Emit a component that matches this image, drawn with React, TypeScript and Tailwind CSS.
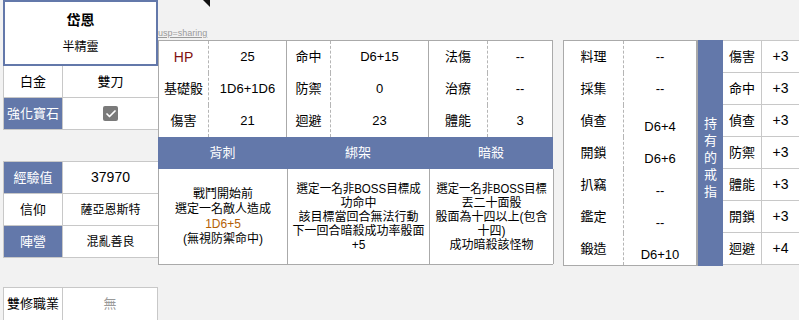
import type { ReactNode } from "react";
import { Check } from "lucide-react";

const FONT = "font-['Liberation_Sans','Noto_Sans_CJK_TC',sans-serif]";

const stats = [
  ["HP", "25", "命中", "D6+15", "法傷", "--"],
  ["基礎骰", "1D6+1D6", "防禦", "0", "治療", "--"],
  ["傷害", "21", "迴避", "23", "體能", "3"],
];

// 技能 — rows from the third on sit a bit lower in the value column
const skills = [
  ["料理", "--"],
  ["採集", "--"],
  ["偵查", "D6+4"],
  ["開鎖", "D6+6"],
  ["扒竊", "--"],
  ["鑑定", "--"],
  ["鍛造", "D6+10"],
];

const rings = [
  ["傷害", "+3"],
  ["命中", "+3"],
  ["偵查", "+3"],
  ["防禦", "+3"],
  ["體能", "+3"],
  ["開鎖", "+3"],
  ["迴避", "+4"],
];

function Line({ children, squeeze = "" }: { children: ReactNode; squeeze?: string }) {
  return (
    <div className="flex justify-center whitespace-nowrap">
      <span className={`inline-block origin-center ${squeeze}`}>{children}</span>
    </div>
  );
}

function LeftCol() {
  return (
    <div className="flex w-[155px] shrink-0 flex-col text-[13px] text-black">
      {/* 角色名 */}
      <div className="flex h-[72px] flex-col items-center border-2 border-[#6378aa] bg-white pt-[8px]">
        <div className="text-[14px] font-semibold leading-[20px]">岱恩</div>
        <div className="mt-[9px] text-[12px] leading-[16px]">半精靈</div>
      </div>
      <div className="grid grid-cols-[59px_1fr] border-l border-[#c8c8c8] bg-white">
        <div className="flex h-[32px] items-center justify-center border-r border-b border-[#c8c8c8]">白金</div>
        <div className="flex h-[32px] items-center justify-center border-b border-[#c8c8c8]">雙刀</div>
        <div className="flex h-[32px] items-center justify-center border-r border-b border-[#c8c8c8] bg-[#6378aa] text-white">強化寶石</div>
        <div className="flex h-[32px] items-center justify-center border-b border-[#c8c8c8]">
          <span className="flex h-[15px] w-[15px] items-center justify-center rounded-[2px] bg-[#7a7a7a]">
            <Check size={12} strokeWidth={3.5} className="text-white" />
          </span>
        </div>
      </div>

      <div className="mt-[31px] grid grid-cols-[59px_1fr] border-t border-l border-[#c8c8c8] bg-white">
        <div className="flex h-[32px] items-center justify-center border-r border-b border-[#c8c8c8] bg-[#6378aa] text-white">經驗值</div>
        <div className="flex h-[32px] items-center justify-center border-b border-[#c8c8c8] text-[14px]">37970</div>
        <div className="flex h-[32px] items-center justify-center border-r border-b border-[#c8c8c8]">信仰</div>
        <div className="flex h-[32px] items-center justify-center border-b border-[#c8c8c8] text-[12px]">薩亞恩斯特</div>
        <div className="flex h-[32px] items-center justify-center border-r border-b border-[#c8c8c8] bg-[#6378aa] text-white">陣營</div>
        <div className="flex h-[32px] items-center justify-center border-b border-[#c8c8c8] text-[12px]">混亂善良</div>
      </div>

      <div className="mt-[29px] grid grid-cols-[59px_1fr] border-t border-l border-[#c8c8c8] bg-white">
        <div className="flex h-[32px] items-center justify-center border-r border-[#c8c8c8]">雙修職業</div>
        <div className="flex h-[32px] items-center justify-center border-r border-[#c8c8c8] text-[#9a9a9a]">無</div>
      </div>
    </div>
  );
}

function MidCol() {
  return (
    <div className="flex w-[395px] shrink-0 flex-col text-[13px] text-black">
      <div className="relative flex h-[40px] flex-col justify-end pb-[2px]">
        {/* comment marker */}
        <svg className="absolute left-[45px] top-0" width="7" height="7" viewBox="0 0 7 7">
          <polygon points="0,0 7,0 7,7" fill="#111" />
        </svg>
        <span className="text-[9px] leading-[10px] text-[#9a9a9a] underline">usp=sharing</span>
      </div>

      <div className="grid grid-cols-[50px_78px_44px_98px_59px_65px] border-t border-l border-[#aaaaaa] bg-white">
        {stats.map((row, r) =>
          row.map((cell, c) => {
            const label = c % 2 === 0;
            return (
              <div
                key={`${r}-${c}`}
                className={
                  label
                    ? "flex h-[32px] items-center justify-center border-r border-dashed border-[#b5b5b5]"
                    : "flex h-[32px] items-center justify-center border-r border-[#aaaaaa]"
                }
              >
                <span className={cell === "HP" ? "text-[14px] text-[#7f1010]" : ""}>{cell}</span>
              </div>
            );
          })
        )}
      </div>

      <div className="grid h-[32px] grid-cols-[129px_142px_124px] bg-[#6378aa] text-white">
        <div className="flex items-center justify-center">背刺</div>
        <div className="flex items-center justify-center">綁架</div>
        <div className="flex items-center justify-center">暗殺</div>
      </div>

      <div className="grid h-[96px] grid-cols-[129px_142px_124px] border-l border-b border-[#aaaaaa] bg-white text-[12px] leading-[14px]">
        <div className="flex flex-col justify-center border-r border-[#aaaaaa] leading-[15px]">
          <Line>戰鬥開始前</Line>
          <Line>選定一名敵人造成</Line>
          <Line>
            <span className="text-[#b45f06]">1D6+5</span>
          </Line>
          <Line>(無視防禦命中)</Line>
        </div>
        <div className="flex flex-col justify-center overflow-hidden border-r border-[#aaaaaa]">
          <Line squeeze="scale-x-[0.96]">選定一名非BOSS目標成</Line>
          <Line>功命中</Line>
          <Line>該目標當回合無法行動</Line>
          <Line>下一回合暗殺成功率骰面</Line>
          <Line>+5</Line>
        </div>
        <div className="flex flex-col justify-center overflow-hidden border-r border-[#aaaaaa]">
          <Line squeeze="scale-x-[0.94]">選定一名非BOSS目標</Line>
          <Line>丟二十面骰</Line>
          <Line>骰面為十四以上(包含</Line>
          <Line>十四)</Line>
          <Line>成功暗殺該怪物</Line>
        </div>
      </div>
    </div>
  );
}

function RightCol() {
  return (
    <div className="ml-[10px] mt-[40px] flex items-start text-[13px] text-black">
      {/* 技能 */}
      <div className="grid w-[135px] grid-cols-[60px_1fr] border-t border-l border-b border-r-2 border-[#aaaaaa] bg-white">
        {skills.map(([name, val], i) => (
          <div key={name} className="contents">
            <div className="flex h-[32px] items-center justify-center border-r border-dashed border-[#b5b5b5]">{name}</div>
            <div className={i < 2 ? "flex h-[32px] items-center justify-center" : "flex h-[32px] items-center justify-center pt-[11px]"}>{val}</div>
          </div>
        ))}
      </div>

      <div className="flex h-[226px] w-[25px] flex-col items-center justify-center bg-[#6378aa] pt-[8px] text-[13px] leading-[17px] text-white">
        {"持有的戒指".split("").map((ch) => (
          <span key={ch}>{ch}</span>
        ))}
      </div>

      <div className="grid w-[76px] grid-cols-[39px_1fr] border-t border-[#c8c8c8] bg-white">
        {rings.map(([name, val]) => (
          <div key={name} className="contents">
            <div className="flex h-[32px] items-center justify-center border-r border-b border-[#c8c8c8]">{name}</div>
            <div className="flex h-[32px] items-center justify-center border-b border-[#c8c8c8] text-[14px]">{val}</div>
          </div>
        ))}
      </div>
    </div>
  );
}

export default function App() {
  return (
    <div className={`flex h-[320px] w-[799px] overflow-hidden bg-[#f2f2f2] pl-[3px] ${FONT}`}>
      <LeftCol />
      <MidCol />
      <RightCol />
    </div>
  );
}
